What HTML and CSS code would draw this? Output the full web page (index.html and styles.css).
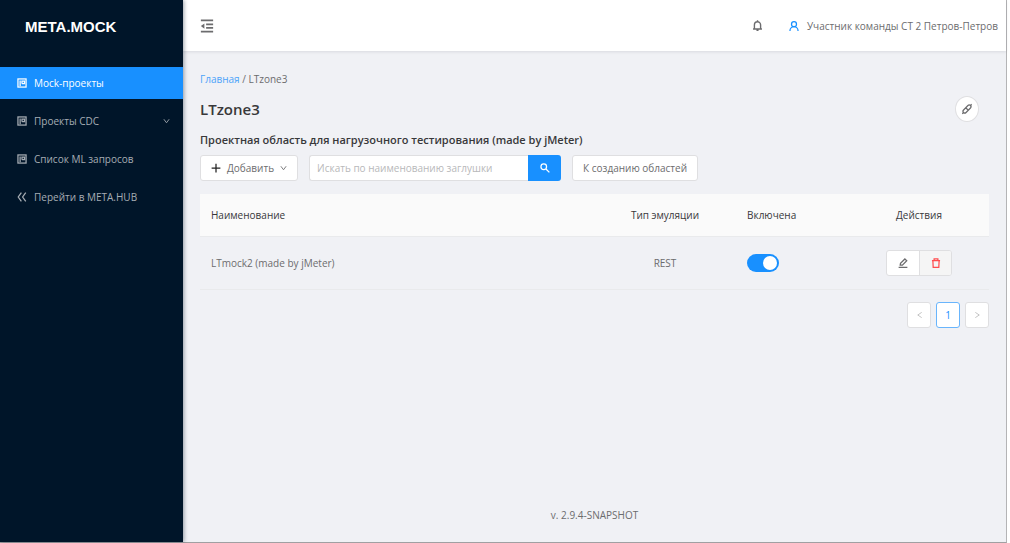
FILE: index.html
```html
<!DOCTYPE html>
<html lang="ru">
<head>
  <meta charset="UTF-8" />
  <meta name="viewport" content="width=device-width,initial-scale=1" />
  <title>META.MOCK</title>
  <link rel="stylesheet" href="styles.css">
</head>
<body>
  <svg class="sprite" aria-hidden="true">
    <symbol id="i-project" viewBox="0 0 16 16">
      <rect x="1.5" y="1.5" width="13" height="13" />
      <path d="M5 4v9M8 9V5h4v4H8" />
    </symbol>
    <symbol id="i-down" viewBox="0 0 16 16"><path d="M2 4l6 8 6-8" /></symbol>
    <symbol id="i-left" viewBox="0 0 16 16"><path d="M13 2L4 8l9 6" /></symbol>
    <symbol id="i-right" viewBox="0 0 16 16"><path d="M3 2l9 6-9 6" /></symbol>
  </svg>

  <div class="layout">
    <aside class="sider">
      <div class="logo">META.MOCK</div>
      <nav class="menu">
        <a class="menu-item active" href="#"><svg class="icon"><use href="#i-project" /></svg>Mock-проекты</a>
        <a class="menu-item" href="#"><svg class="icon"><use href="#i-project" /></svg>Проекты CDC<svg class="icon icon-xs arrow"><use href="#i-down" /></svg></a>
        <a class="menu-item" href="#"><svg class="icon"><use href="#i-project" /></svg>Список ML запросов</a>
        <a class="menu-item" href="#"><svg class="icon" viewBox="0 0 16 16"><path d="M7 1L2 8l5 7M14 1L9 8l5 7" /></svg>Перейти в META.HUB</a>
      </nav>
    </aside>

    <div class="main">
      <header class="header">
        <button class="plain" aria-label="Свернуть меню">
          <svg class="icon icon-lg" viewBox="0 0 16 16"><path d="M1 1.5h14M7 6h8M7 10h8M1 14.5h14" /><path class="fill" d="M1 8l4-3v6z" /></svg>
        </button>
        <div class="user">
          <button class="plain" aria-label="Уведомления">
            <svg class="icon icon-md" viewBox="0 0 16 16"><path d="M1.5 13h13M3.5 13V7a4.5 4.500 0 0 1 9 0v6M8 2.500V0.500M6.500 15h3" /></svg>
          </button>
          <a class="user-name" href="#">
            <svg class="icon blue" viewBox="0 0 16 16"><circle cx="8" cy="5" r="4" /><path d="M1.500 16c0-4 3-7 6.500-7s6.500 3 6.500 7" /></svg>
            Участник команды СТ 2 Петров-Петров
          </a>
        </div>
      </header>

      <main class="content">
        <div class="breadcrumb"><a href="#">Главная</a> / LTzone3</div>
        <div class="title-row">
          <h1>LTzone3</h1>
          <button class="round" aria-label="Подключение">
            <svg class="icon" viewBox="0 0 16 16"><path d="M6 6l3.500-3.500a2.800 2.800 0 0 1 4 4L10 10zM6 6L2.500 9.500a2.800 2.800 0 0 0 4 4L10 10M13.500 2.500L15.500 0.500M2.500 13.500L0.500 15.500" /></svg>
          </button>
        </div>
        <h2>Проектная область для нагрузочного тестирования (made by jMeter)</h2>

        <div class="toolbar">
          <button class="btn">
            <svg class="icon dark" viewBox="0 0 16 16"><path d="M8 1v14M1 8h14" /></svg>
            Добавить
            <svg class="icon icon-xs"><use href="#i-down" /></svg>
          </button>
          <form class="search">
            <input type="text" placeholder="Искать по наименованию заглушки" aria-label="Поиск">
            <button type="button" aria-label="Найти">
              <svg class="icon" viewBox="0 0 16 16"><circle cx="6" cy="6" r="4.500" /><path d="M9.500 9.500L15 15" /></svg>
            </button>
          </form>
          <button class="btn">К созданию областей</button>
        </div>

        <table class="table">
          <thead>
            <tr>
              <th>Наименование</th>
              <th class="col-type">Тип эмуляции</th>
              <th class="col-on">Включена</th>
              <th class="col-actions">Действия</th>
            </tr>
          </thead>
          <tbody>
            <tr>
              <td>LTmock2 (made by jMeter)</td>
              <td class="col-type">REST</td>
              <td class="col-on"><input class="switch" type="checkbox" aria-label="Включена" checked></td>
              <td class="col-actions">
                <div class="btn-group">
                  <button aria-label="Изменить"><svg class="icon" viewBox="0 0 16 16"><path d="M1 15h14M3.500 11.500L4 8.500l7-7 3 3-7 7z" /></svg></button>
                  <button class="danger" aria-label="Удалить"><svg class="icon" viewBox="0 0 16 16"><path d="M1.500 4h13M5 4V1.500h6V4M3 4l.5 11h9L13 4" /></svg></button>
                </div>
              </td>
            </tr>
          </tbody>
        </table>

        <div class="pagination">
          <button aria-label="Назад" disabled><svg class="icon icon-xs"><use href="#i-left" /></svg></button>
          <button class="current">1</button>
          <button aria-label="Вперёд" disabled><svg class="icon icon-xs"><use href="#i-right" /></svg></button>
        </div>
      </main>

      <footer class="footer">v. 2.9.4-SNAPSHOT</footer>
    </div>
  </div>
</body>
</html>
```
FILE: styles.css
```css
:root {
  --blue: #1890ff;
  --bg: #f0f1f5;
  --border: #dfdfe1;
  --text: #6c6c6e;
  --dark: #38383a;
}
* { box-sizing: border-box; margin: 0; padding: 0 }
body {
  padding-right: 3px;
  background: #fff; color: var(--text);
  font: 10px/18px "Open Sans", "Noto Sans", sans-serif;
}
button, input { font: inherit; color: inherit }
button { cursor: pointer }
a { color: inherit; text-decoration: none }

.sprite { position: absolute; width: 0; height: 0 }
.icon {
  width: 10px; height: 12px; flex: none;
  fill: none; stroke: currentColor; stroke-width: 2;
}
.icon-xs { width: 7px; height: 8px; stroke-width: 2 }
.icon-md { width: 11px; height: 13px }
.icon-lg { width: 14px; height: 14px }
.fill { fill: currentColor; stroke: none }
.blue { color: var(--blue) }
.dark { color: #222 }

.layout {
  display: flex; min-height: 100vh;
  border-right: 1px solid #b4b4b6; border-bottom: 1px solid #a0a0a2;
}

/* sidebar */
.sider {
  width: 183px; flex: none; z-index: 1;
  background: #001529; color: #a6adb4;
  box-shadow: 1px 0 4px rgba(0,21,41,0.4);
}
.logo {
  padding: 15px 25px 28px;
  font: bold 15px/24px "Liberation Sans", Arial, sans-serif; color: #fff;
}
.menu { display: flex; flex-direction: column; gap: 6px }
.menu-item {
  display: flex; align-items: center; gap: 7px;
  height: 32px; padding: 0 13px 0 17px;
}
.menu-item.active { background: var(--blue); color: #fff }
.arrow { margin-left: auto }

/* header */
.main { flex: 1; min-width: 0; display: flex; flex-direction: column; background: var(--bg) }
.header {
  display: flex; align-items: center; justify-content: space-between;
  height: 51px; padding: 0 8px 0 17px;
  background: #fff; box-shadow: 0 1px 3px rgba(0,21,41,0.1);
}
.plain { display: flex; border: 0; background: none }
.user { display: flex; align-items: center; gap: 26px }
.user-name { display: flex; align-items: center; gap: 8px }

/* content */
.content { flex: 1; padding: 19px 17px 0 }
.breadcrumb a { color: #4ba3fa }
.title-row {
  display: flex; align-items: center; justify-content: space-between;
  margin: 8px 0; padding-right: 10px;
}
h1 { font-size: 15px; line-height: 26px; font-weight: 600; color: var(--dark) }
h2 { font-size: 11px; line-height: 20px; font-weight: 600; color: var(--dark) }
.round {
  display: flex; align-items: center; justify-content: center;
  width: 24px; height: 26px; border: 1px solid var(--border); border-radius: 50%;
  background: #fff;
}

.toolbar { display: flex; gap: 11px; margin: 5px 0 13px }
.btn {
  display: flex; align-items: center; gap: 6px;
  height: 26px; padding: 0 10px;
  border: 1px solid var(--border); border-radius: 3px; background: #fff;
}
.search { display: flex; width: 252px }
.search input {
  flex: 1; min-width: 0; height: 26px; padding: 0 7px;
  border: 1px solid var(--border); border-right: 0; border-radius: 3px 0 0 3px;
  background: #fff;
}
.search input::placeholder { color: #b8b8ba }
.search button {
  display: flex; align-items: center; justify-content: center;
  width: 33px; border: 0; border-radius: 0 3px 3px 0;
  background: var(--blue); color: #fff;
}

.table { width: 100%; border-collapse: collapse; table-layout: fixed }
.table th, .table td { padding: 0 11px; text-align: left; border-bottom: 1px solid #e9eaec }
.table th { height: 42px; background: #fafafa; font-weight: 500; color: var(--dark) }
.table td { height: 53px }
.table .col-type { width: 142px; text-align: center }
.table .col-on { width: 113px }
.table .col-actions { width: 140px; text-align: center }

.switch {
  display: flex; align-items: center; justify-content: flex-end;
  width: 32px; height: 18px; padding: 2px; appearance: none;
  border-radius: 9px; background: var(--blue); cursor: pointer;
}
.switch::before { content: ""; width: 14px; height: 14px; border-radius: 50%; background: #fff }
.switch:not(:checked) { justify-content: flex-start; background: #bfbfbf }

.btn-group {
  display: inline-flex; vertical-align: middle;
  border: 1px solid var(--border); border-radius: 3px; background: #fff; overflow: hidden;
}
.btn-group button {
  display: flex; align-items: center; justify-content: center;
  width: 32px; height: 24px; border: 0; background: none;
}
.btn-group .danger { border-left: 1px solid var(--border); background: #f5f5f5; color: #ff4d4f }

.pagination { display: flex; justify-content: flex-end; gap: 5px; margin-top: 12px }
.pagination button {
  display: flex; align-items: center; justify-content: center;
  width: 24px; height: 26px;
  border: 1px solid var(--border); border-radius: 3px; background: #fff;
}
.pagination button:disabled { color: #bbb; cursor: default }
.pagination .current { border-color: #69b5fc; color: var(--blue) }

.footer { padding: 18px; text-align: center }
```
